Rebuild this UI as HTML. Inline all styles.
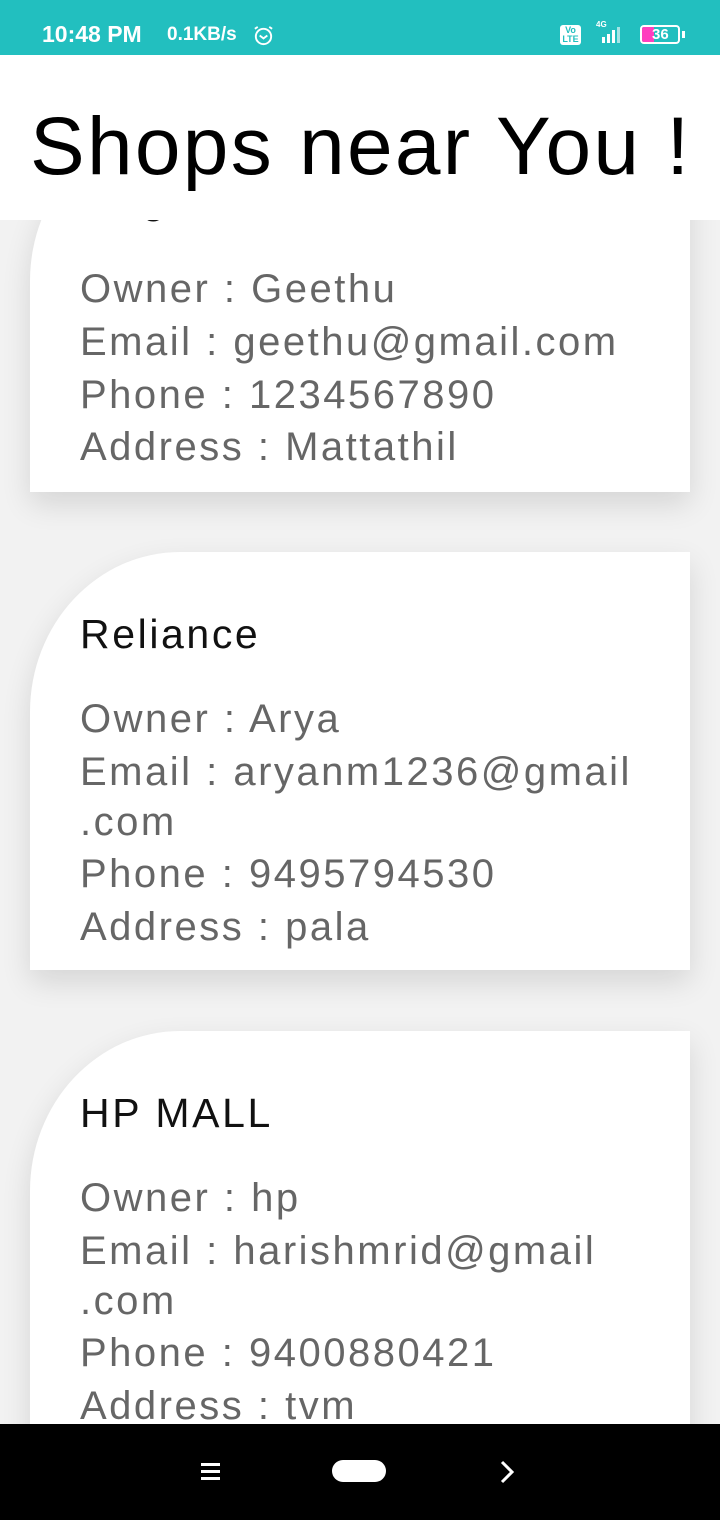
<!DOCTYPE html>
<html><head><meta charset="utf-8"><style>
*{margin:0;padding:0;box-sizing:border-box}
body{width:720px;height:1520px;overflow:hidden;background:#f2f2f2;font-family:"Liberation Sans",sans-serif;position:relative}
.sb{position:absolute;top:0;left:0;width:720px;height:55px;background:#22bfbf;color:#fff;font-weight:bold;z-index:5}
.hd{position:absolute;top:55px;left:0;width:720px;height:165px;background:#fff;z-index:4}
.hd div{position:absolute;left:30px;top:92px;font-size:82px;line-height:0;color:#000;letter-spacing:2.3px}
.card{position:absolute;left:30px;width:660px;background:#fff;border-top-left-radius:150px 160px;box-shadow:0 12px 30px rgba(0,0,0,0.12)}
.t{position:absolute;left:50px;font-size:41px;color:#111;line-height:0;letter-spacing:2.6px}
.l{position:absolute;left:50px;font-size:40px;color:#666;line-height:0;letter-spacing:2.5px;white-space:nowrap}
.nav{position:absolute;top:1424px;left:0;width:720px;height:96px;background:#000;z-index:5}
</style></head><body>
<div class="sb">
<span style="position:absolute;left:42px;top:21px;font-size:23px">10:48 PM</span>
<span style="position:absolute;left:167px;top:24px;font-size:19px">0.1KB/s</span>
<svg style="position:absolute;left:252px;top:24px" width="23" height="23" viewBox="0 0 24 24" fill="none" stroke="#fff" stroke-width="2"><circle cx="12" cy="13" r="8"/><path d="M8 12l4 3 4-3M3 5l3-2M21 5l-3-2"/></svg>
<div style="position:absolute;left:560px;top:25px;width:21px;height:20px;background:#fff;border-radius:3px;font-size:9px;color:#22bfbf;text-align:center;line-height:9px;padding-top:1px">Vo<br>LTE</div>
<span style="position:absolute;left:596px;top:20px;font-size:8px">4G</span>
<svg style="position:absolute;left:594px;top:26px" width="36" height="18"><rect x="8" y="11" width="3" height="6" fill="#fff"/><rect x="13" y="8" width="3" height="9" fill="#fff"/><rect x="18" y="4" width="3" height="13" fill="#fff"/><rect x="23" y="1" width="3" height="16" fill="#fff" opacity=".6"/></svg>
<div style="position:absolute;left:640px;top:25px;width:40px;height:19px;border:2px solid #fff;border-radius:4px;overflow:hidden"><div style="position:absolute;left:0;top:0;width:12px;height:100%;background:#ff3fbf"></div><span style="position:relative;left:10px;top:-1px;font-size:15px">36</span></div>
<div style="position:absolute;left:682px;top:31px;width:3px;height:7px;background:#fff"></div>
</div>
<div class="hd"><div>Shops near You !</div></div>

<div class="card" style="top:121px;height:371px">
<div class="t" style="top:78px">Magic Stores</div>
<div class="l" style="top:168px">Owner : Geethu</div>
<div class="l" style="top:221px">Email : geethu@gmail.com</div>
<div class="l" style="top:274px">Phone : 1234567890</div>
<div class="l" style="top:326px">Address : Mattathil</div>
</div>

<div class="card" style="top:552px;height:418px">
<div class="t" style="top:82px">Reliance</div>
<div class="l" style="top:167px">Owner : Arya</div>
<div class="l" style="top:220px">Email : aryanm1236@gmail</div>
<div class="l" style="top:270px">.com</div>
<div class="l" style="top:322px">Phone : 9495794530</div>
<div class="l" style="top:375px">Address : pala</div>
</div>

<div class="card" style="top:1031px;height:450px">
<div class="t" style="top:82px">HP MALL</div>
<div class="l" style="top:167px">Owner : hp</div>
<div class="l" style="top:220px">Email : harishmrid@gmail</div>
<div class="l" style="top:270px">.com</div>
<div class="l" style="top:322px">Phone : 9400880421</div>
<div class="l" style="top:375px">Address : tvm</div>
</div>

<div class="nav">
<div style="position:absolute;left:201px;top:39px;width:19px;height:3px;background:#fff;box-shadow:0 7px 0 #fff,0 14px 0 #fff"></div>
<div style="position:absolute;left:332px;top:36px;width:54px;height:22px;background:#fff;border-radius:11px"></div>
<svg style="position:absolute;left:498px;top:36px" width="20" height="24"><path d="M4 2l10 10-10 10" fill="none" stroke="#fff" stroke-width="3"/></svg>
</div>
</body></html>
